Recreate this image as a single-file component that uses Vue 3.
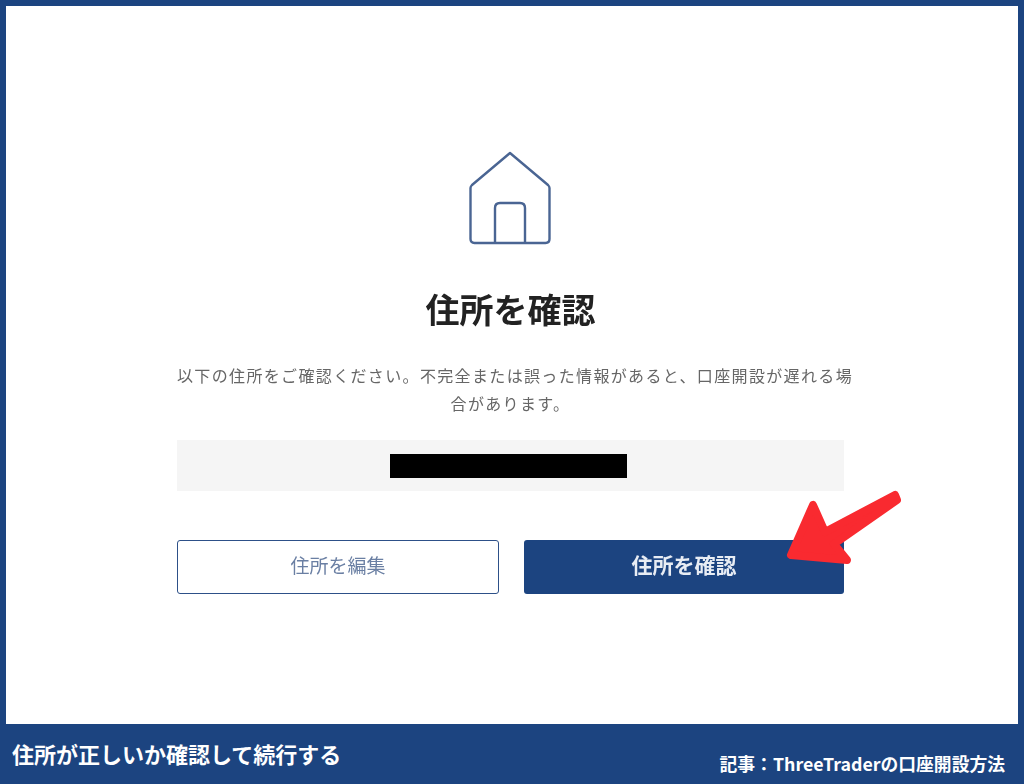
<script setup>
const title = '住所を確認'
</script>

<template>
  <div class="page">
    <main class="panel">
      <div class="column">
        <svg class="house" width="84" height="96" viewBox="0 0 84 96" fill="none" stroke="#4a6593" stroke-width="2.4" stroke-linejoin="round">
          <path d="M42 3 L80 35 Q81.5 36.5 81.5 38 V89 Q81.5 93 77.5 93 H6.5 Q2.5 93 2.5 89 V38 Q2.5 36.5 4 35 Z" />
          <path d="M27 93 V58 Q27 53 32 53 H52 Q57 53 57 58 V93" />
        </svg>
        <h1 class="title">{{ title }}</h1>
        <p class="message">以下の住所をご確認ください。不完全または誤った情報があると、口座開設が遅れる場<br>合があります。</p>
        <div class="address"><span class="redacted"></span></div>
        <div class="actions">
          <button class="btn btn-outline">住所を編集</button>
          <button class="btn btn-solid">{{ title }}</button>
          <svg class="arrow" width="130" height="90" viewBox="0 0 130 90">
            <path d="M31 17 L9 67 L65 72 L52 56 L115 12 L113 7 L43 44 Z" fill="#f92a30" stroke="#f92a30" stroke-width="8" stroke-linejoin="round" />
          </svg>
        </div>
      </div>
    </main>
    <footer class="caption">
      <span class="caption-main">住所が正しいか確認して続行する</span>
      <span class="caption-source">記事：ThreeTraderの口座開設方法</span>
    </footer>
  </div>
</template>

<style>
html, body { margin: 0; background: #1c4480; }
</style>

<style scoped>
.page {
  width: 1024px;
  height: 784px;
  box-sizing: border-box;
  display: flex;
  flex-direction: column;
  background: #1c4480;
  padding-top: 6px;
  font-family: "Noto Sans CJK JP", "Noto Sans", sans-serif;
}
.panel {
  height: 718px;
  margin: 0 6px;
  background: #fff;
  display: flex;
  justify-content: center;
  filter: blur(0.4px);
}
.column {
  width: 667px;
  margin-left: -3px;
  padding-top: 144px;
  display: flex;
  flex-direction: column;
  align-items: center;
}
.house { display: block; margin-left: -1px; }
.title {
  margin: 40px 0 0;
  font-size: 34px;
  line-height: 46px;
  font-weight: 700;
  color: #222;
}
.message {
  width: 100%;
  margin: 29px 0 0;
  font-size: 16px;
  line-height: 28px;
  letter-spacing: 1.35px;
  color: #666;
  text-align: center;
  white-space: nowrap;
}
.address {
  align-self: stretch;
  height: 51px;
  margin-top: 23px;
  background: #f5f5f5;
  display: flex;
  align-items: center;
  justify-content: center;
}
.redacted {
  width: 237px;
  height: 24px;
  background: #000;
  margin-left: -5px;
}
.actions {
  position: relative;
  align-self: stretch;
  margin-top: 49px;
  display: flex;
  justify-content: space-between;
}
.btn {
  height: 54px;
  box-sizing: border-box;
  border-radius: 3px;
  font-family: inherit;
  padding: 0 0 6px;
}
.btn-outline {
  width: 322px;
  border: 1.5px solid #2d5088;
  background: #fff;
  color: #6a7fa3;
  font-size: 19px;
}
.btn-solid {
  width: 320px;
  border: 0;
  background: #1c4480;
  color: #e8edf4;
  font-size: 21px;
  font-weight: 700;
}
.arrow {
  position: absolute;
  left: 605px;
  top: -52px;
}
.caption {
  flex: 1;
  display: flex;
  justify-content: space-between;
  padding: 0 19px 0 12px;
  color: #fff;
  font-weight: 700;
}
.caption-main { font-size: 22px; line-height: 28px; margin-top: 15px; }
.caption-source { font-size: 17.8px; line-height: 24px; margin-top: 27px; }
</style>
